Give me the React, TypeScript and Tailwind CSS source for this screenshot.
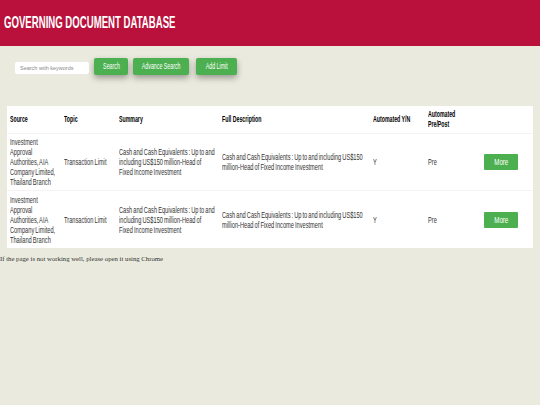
import type { ReactNode } from "react";

const rows = [1, 2];

// no condensed font is installed, so the text is squeezed horizontally
function Narrow({ children }: { children: ReactNode }) {
  return <span className="block w-[159%] origin-left scale-x-[.63] [word-spacing:-0.8px]">{children}</span>;
}

function HeadCell({ children }: { children?: ReactNode }) {
  return (
    <th className="pl-[3px]">
      <span className="block w-[172%] origin-left scale-x-[.58]">{children}</span>
    </th>
  );
}

function GreenButton({ label, width }: { label: string; width: string }) {
  return (
    <button
      className={`flex h-[17px] items-center justify-center rounded-[2px] bg-[#4caf50] text-[8.5px] leading-none text-white shadow-[0_3px_6px_rgba(0,0,0,0.35)] ${width}`}
    >
      <span className="scale-x-[.62] whitespace-nowrap">{label}</span>
    </button>
  );
}

export default function App() {
  return (
    <div className="min-h-[405px] bg-[#eaeade] font-['Liberation_Sans',sans-serif]">
      <header className="flex h-[46px] items-center bg-[#b9113c] pl-[4px]">
        <h1 className="origin-left scale-x-[.565] whitespace-nowrap text-[17px] font-bold text-white">
          GOVERNING DOCUMENT DATABASE
        </h1>
      </header>

      <div className="flex items-start pt-[12px] pl-[15px]">
        <input
          placeholder="Search with keywords"
          className="mt-[4px] h-[12px] w-[74px] rounded-[2px] bg-white px-[5px] text-[5.5px] placeholder:text-[#8a8a8a]"
        />
        <div className="w-[5px]" />
        <GreenButton label="Search" width="w-[34px]" />
        <div className="w-[5px]" />
        <GreenButton label="Advance Search" width="w-[56px]" />
        <div className="w-[7px]" />
        <GreenButton label="Add Limit" width="w-[41px]" />
      </div>

      <div className="px-[7px] pt-[31px]">
        <table className="w-[526px] table-fixed border-collapse bg-white text-left text-[9px] leading-[10px] text-[#333]">
          <colgroup>
            <col className="w-[54px]" />
            <col className="w-[55px]" />
            <col className="w-[103px]" />
            <col className="w-[151px]" />
            <col className="w-[55px]" />
            <col className="w-[40px]" />
            <col />
          </colgroup>
          <thead>
            <tr className="h-[27px] border-b border-[#f4f4f4] font-bold text-black">
              <HeadCell>Source</HeadCell>
              <HeadCell>Topic</HeadCell>
              <HeadCell>Summary</HeadCell>
              <HeadCell>Full Description</HeadCell>
              <HeadCell>Automated Y/N</HeadCell>
              <HeadCell>Automated Pre/Post</HeadCell>
              <th />
            </tr>
          </thead>
          <tbody>
            {rows.map((r) => (
              <tr key={r} className="h-[57.5px] border-b border-[#f4f4f4] last:border-0">
                <td className="pl-[3px]">
                  <Narrow>
                    Investment
                    <br />
                    Approval
                    <br />
                    Authorities, AIA
                    <br />
                    Company Limited,
                    <br />
                    Thailand Branch
                  </Narrow>
                </td>
                <td className="pl-[3px]"><Narrow>Transaction Limit</Narrow></td>
                <td className="pr-[3px] pl-[3px]"><Narrow>Cash and Cash Equivalents : Up to and including US$150 million-Head of Fixed Income Investment</Narrow></td>
                <td className="pr-[3px] pl-[3px]"><Narrow>Cash and Cash Equivalents : Up to and including US$150 million-Head of Fixed Income Investment</Narrow></td>
                <td className="pl-[3px]"><Narrow>Y</Narrow></td>
                <td className="pl-[3px]"><Narrow>Pre</Narrow></td>
                <td className="pl-[19px]">
                  <button className="flex h-[16px] w-[34px] items-center justify-center rounded-[1px] bg-[#4caf50] text-[9px] text-white">
                    <span className="scale-x-[.68]">More</span>
                  </button>
                </td>
              </tr>
            ))}
          </tbody>
        </table>
      </div>

      <p className="mt-[6px] font-['Liberation_Serif',serif] text-[6.75px] leading-[10px] text-[#333]">
        If the page is not working well, please open it using Chrome
      </p>
    </div>
  );
}
